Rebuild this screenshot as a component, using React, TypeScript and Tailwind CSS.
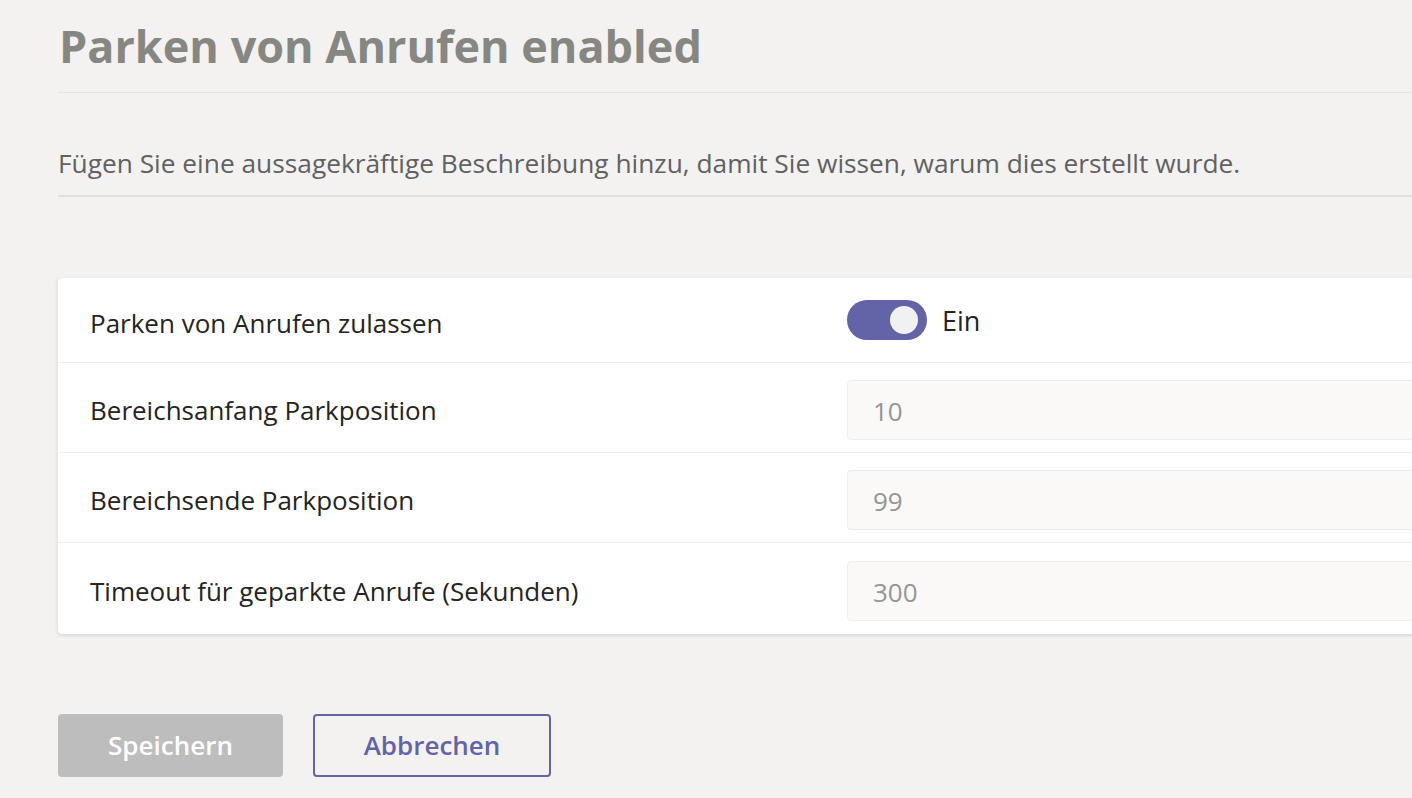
import React from "react";

const font = { fontFamily: '"Open Sans", "Noto Sans", sans-serif' };

function Row({ label, children, h, last, shift }: { label: string; children: React.ReactNode; h: string; last?: boolean; shift?: boolean }) {
  return (
    <div className={`flex ${h} items-center ${last ? "" : "border-b border-[#efeeed]"}`}>
      <div className="w-[789px] shrink-0 pl-[32px] pt-[6px] text-[26px] text-[#252423]">{label}</div>
      <div className={`flex flex-1 items-center ${shift ? "pt-[4px]" : ""}`}>{children}</div>
    </div>
  );
}

function Field({ value }: { value: string }) {
  return (
    <div className="flex h-[60px] w-full items-center rounded-[4px] border border-[#f0eeec] bg-[#faf9f8] pl-[25px] pt-[3px] text-[26px] text-[#979593]">
      {value}
    </div>
  );
}

export default function App() {
  return (
    <div className="min-h-[798px] w-full overflow-hidden bg-[#f3f2f1]" style={font}>
      <div className="w-[1500px] pl-[58px]">
        <div className="h-[93px] border-b border-[#e6e4e2] pt-[16px]">
          <h1 className="pl-[1px] text-[45px] font-bold leading-[60px] text-[#878782]">Parken von Anrufen enabled</h1>
        </div>
        <div className="flex h-[104px] items-center border-b-2 border-[#e1dfdd] pt-[40px]">
          <p className="text-[26.3px] text-[#616161]">
            Fügen Sie eine aussagekräftige Beschreibung hinzu, damit Sie wissen, warum dies erstellt wurde.
          </p>
        </div>
        <div className="mt-[81px] rounded-[4px] bg-white shadow-[0_1px_4px_rgba(0,0,0,0.14)]">
          <Row label="Parken von Anrufen zulassen" h="h-[85px]">
            <div className="flex items-center gap-[15px]">
              <div className="flex h-[40px] w-[80px] items-center justify-end rounded-full bg-[#6264a7] pr-[9px]">
                <div className="h-[28px] w-[28px] rounded-full bg-[#f1f1f1]" />
              </div>
              <span className="pt-[3px] text-[27px] text-[#252423]">Ein</span>
            </div>
          </Row>
          <Row label="Bereichsanfang Parkposition" h="h-[90px]" shift>
            <Field value="10" />
          </Row>
          <Row label="Bereichsende Parkposition" h="h-[90px]" shift>
            <Field value="99" />
          </Row>
          <Row label="Timeout für geparkte Anrufe (Sekunden)" h="h-[91px]" last shift>
            <Field value="300" />
          </Row>
        </div>
        <div className="mt-[80px] flex gap-[30px]">
          <button className="h-[63px] w-[225px] rounded-[4px] bg-[#bdbdbd] text-[26px] font-semibold text-white">
            Speichern
          </button>
          <button className="h-[63px] w-[238px] rounded-[4px] border-2 border-[#6264a7] text-[26px] font-semibold text-[#6264a7]">
            Abbrechen
          </button>
        </div>
      </div>
    </div>
  );
}
